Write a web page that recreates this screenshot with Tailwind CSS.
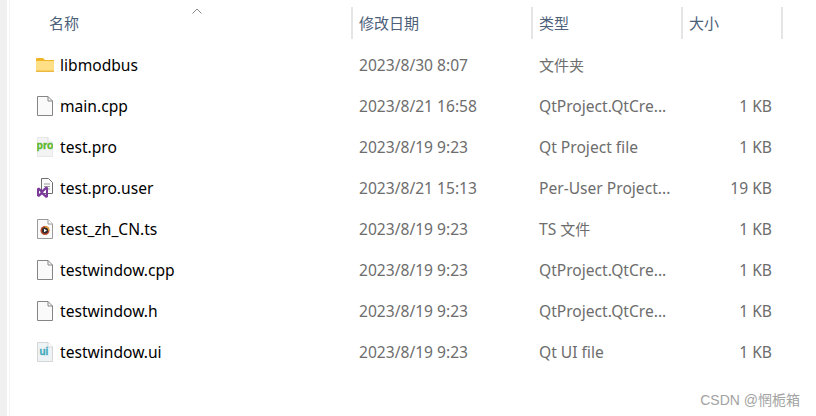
<!DOCTYPE html>
<html lang="zh-CN">
  <head>
    <meta charset="UTF-8" />
    <title>文件列表</title>
    <script src="https://cdn.jsdelivr.net/npm/@tailwindcss/browser@4"></script>
  </head>
  <body class="bg-white overflow-hidden">
    <div class="relative flex w-[816px] h-[416px] font-['Noto_Sans','Noto_Sans_CJK_SC',sans-serif] text-[15.6px] leading-[20px] text-[#6d6d6d]">
      <!-- left pane edge -->
      <div class="w-[7px] bg-[#f0f0f0]"></div>
      <div class="w-[1px] ml-[2px] bg-[#f4f4f4]"></div>
      <div class="flex-1">
        <!-- header -->
        <div class="relative flex h-[32px] mt-[7px] text-[15px] text-[#4c607a]">
          <div class="w-[341px] pl-[39px] pt-[6px]">名称</div>
          <div class="w-[180px] pl-[6px] pt-[6px] border-l-2 border-[#e5e5e5]">修改日期</div>
          <div class="w-[150px] pl-[6px] pt-[6px] border-l-2 border-[#e5e5e5]">类型</div>
          <div class="w-[102px] pl-[6px] pt-[6px] border-x-2 border-[#e5e5e5]">大小</div>
          <svg class="absolute left-[182px] top-[1px]" width="10" height="6" viewBox="0 0 10 6" fill="none" stroke="#8a8a8a" stroke-width="1"><path d="M0.5 5.5 L5 1 L9.5 5.5" /></svg>
        </div>
        <!-- rows -->
        <div class="mt-[5px]">
          <div class="flex h-[41px] items-center">
            <div class="w-[341px] pl-[26px] flex items-center gap-[6px] text-black">
              <svg width="18" height="14" viewBox="0 0 18 14"><path d="M0 1 Q0 0 1 0 H7 L9 2 H18 V14 H0 Z" fill="#f0b429" /><path d="M0 3 H18 V13 Q18 14 17 14 H1 Q0 14 0 13 Z" fill="#ffdf85" /><path d="M0 12.5 H18 V14 H0 Z" fill="#ecb940" /></svg>
              <span>libmodbus</span>
            </div>
            <div class="w-[180px] pl-[8px]">2023/8/30 8:07</div>
            <div class="w-[150px] pl-[8px] text-[15px]">文件夹</div>
            <div class="w-[91px] text-right"></div>
          </div>
          <div class="flex h-[41px] items-center">
            <div class="w-[341px] pl-[27px] flex items-center gap-[7px] text-black">
              <svg width="16" height="20" viewBox="0 0 16 20" fill="#fafafa" stroke="#858585"><path d="M0.5 0.5 H11 L15.5 5 V19.5 H0.5 Z M11 0.5 V5 H15.5" /></svg>
              <span>main.cpp</span>
            </div>
            <div class="w-[180px] pl-[8px]">2023/8/21 16:58</div>
            <div class="w-[150px] pl-[8px]">QtProject.QtCre...</div>
            <div class="w-[91px] text-right">1 KB</div>
          </div>
          <div class="flex h-[41px] items-center">
            <div class="w-[341px] pl-[27px] flex items-center gap-[7px] text-black">
              <svg width="16" height="20" viewBox="0 0 16 20"><path d="M0.5 0.5 H11 L15.5 5 V19.5 H0.5 Z" fill="#f3f3f3" stroke="#e8e8e8" /><path d="M11 0.5 V5 H15.5" fill="#fff" stroke="#dcdcdc" /><text x="-0.5" y="12" font-size="10" font-weight="700" textLength="17" lengthAdjust="spacingAndGlyphs" stroke="#5cb82a" stroke-width="0.3" fill="#5cb82a" font-family="Liberation Sans, sans-serif">pro</text></svg>
              <span>test.pro</span>
            </div>
            <div class="w-[180px] pl-[8px]">2023/8/19 9:23</div>
            <div class="w-[150px] pl-[8px]">Qt Project file</div>
            <div class="w-[91px] text-right">1 KB</div>
          </div>
          <div class="flex h-[41px] items-center">
            <div class="w-[341px] pl-[27px] flex items-center gap-[7px] text-black">
              <svg width="16" height="20" viewBox="0 0 16 20"><path d="M4.5 0.5 H11.5 L15.5 4.5 V15.5 H4.5 Z" fill="#fbfbfb" stroke="#6f6f6f" /><path d="M7 6 H13 M7 8.5 H13 M7 11 H13" stroke="#9a9a9a" /><path d="M0 10.5 L2 9.5 L5 12 L9 8.5 L11 9.5 V19 L9 20 L5 16.5 L2 19 L0 18 Z M2 12.5 V16 L3.7 14.2 Z M9 11.5 L6 14.2 L9 17 Z" fill="#7a3a9a" fill-rule="evenodd" /></svg>
              <span>test.pro.user</span>
            </div>
            <div class="w-[180px] pl-[8px]">2023/8/21 15:13</div>
            <div class="w-[150px] pl-[8px]">Per-User Project...</div>
            <div class="w-[91px] text-right">19 KB</div>
          </div>
          <div class="flex h-[41px] items-center">
            <div class="w-[341px] pl-[27px] flex items-center gap-[7px] text-black">
              <svg width="16" height="20" viewBox="0 0 16 20"><path d="M0.5 0.5 H11 L15.5 5 V19.5 H0.5 Z" fill="#fafafa" stroke="#9a9a9a" /><path d="M11 0.5 V5 H15.5" fill="#fff" stroke="#9a9a9a" /><circle cx="8" cy="11.5" r="4.5" fill="#b5472a" /><path d="M8 7 A4.5 4.5 0 0 1 12.5 11.5 L8 11.5 Z" fill="#e8a13a" /><circle cx="8" cy="11.5" r="3" fill="#2b2b2b" /><path d="M7 9.8 L10 11.5 L7 13.2 Z" fill="#fff" /></svg>
              <span>test_zh_CN.ts</span>
            </div>
            <div class="w-[180px] pl-[8px]">2023/8/19 9:23</div>
            <div class="w-[150px] pl-[8px]">TS <span class="text-[15px]">文件</span></div>
            <div class="w-[91px] text-right">1 KB</div>
          </div>
          <div class="flex h-[41px] items-center">
            <div class="w-[341px] pl-[27px] flex items-center gap-[7px] text-black">
              <svg width="16" height="20" viewBox="0 0 16 20" fill="#fafafa" stroke="#858585"><path d="M0.5 0.5 H11 L15.5 5 V19.5 H0.5 Z M11 0.5 V5 H15.5" /></svg>
              <span>testwindow.cpp</span>
            </div>
            <div class="w-[180px] pl-[8px]">2023/8/19 9:23</div>
            <div class="w-[150px] pl-[8px]">QtProject.QtCre...</div>
            <div class="w-[91px] text-right">1 KB</div>
          </div>
          <div class="flex h-[41px] items-center">
            <div class="w-[341px] pl-[27px] flex items-center gap-[7px] text-black">
              <svg width="16" height="20" viewBox="0 0 16 20" fill="#fafafa" stroke="#858585"><path d="M0.5 0.5 H11 L15.5 5 V19.5 H0.5 Z M11 0.5 V5 H15.5" /></svg>
              <span>testwindow.h</span>
            </div>
            <div class="w-[180px] pl-[8px]">2023/8/19 9:23</div>
            <div class="w-[150px] pl-[8px]">QtProject.QtCre...</div>
            <div class="w-[91px] text-right">1 KB</div>
          </div>
          <div class="flex h-[41px] items-center">
            <div class="w-[341px] pl-[27px] flex items-center gap-[7px] text-black">
              <svg width="16" height="20" viewBox="0 0 16 20"><path d="M0.5 0.5 H11 L15.5 5 V19.5 H0.5 Z" fill="#eef3f6" stroke="#d5d5d5" /><path d="M11 0.5 V5 H15.5" fill="#fff" stroke="#d5d5d5" /><text x="2.5" y="13" font-size="10" font-weight="700" stroke="#3fa9bd" stroke-width="0.3" fill="#3fa9bd" font-family="Liberation Sans, sans-serif">ui</text></svg>
              <span>testwindow.ui</span>
            </div>
            <div class="w-[180px] pl-[8px]">2023/8/19 9:23</div>
            <div class="w-[150px] pl-[8px]">Qt UI file</div>
            <div class="w-[91px] text-right">1 KB</div>
          </div>
        </div>
      </div>
      <!-- watermark -->
      <div class="absolute right-[16px] top-[390px] font-['Liberation_Sans','Noto_Sans_CJK_SC',sans-serif] text-[14px] text-[#a3a3a3]">CSDN @惘栀箱</div>
    </div>
  </body>
</html>
